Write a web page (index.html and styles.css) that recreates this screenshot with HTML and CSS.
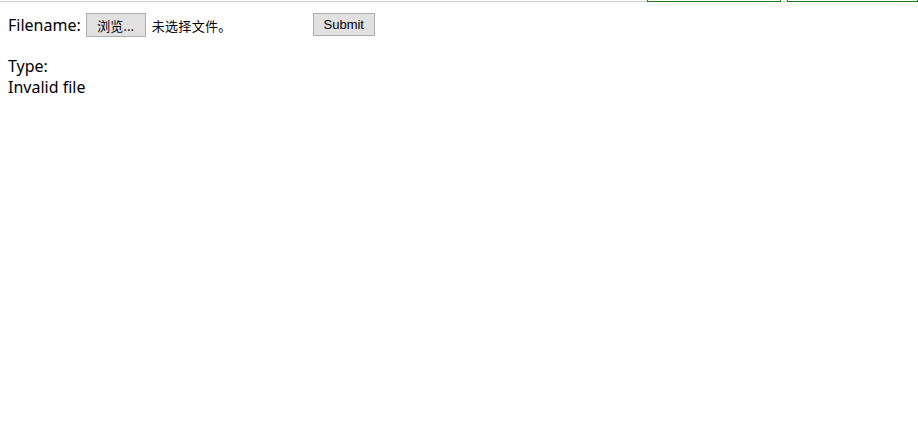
FILE: index.html
```html
<!DOCTYPE html>
<html lang="zh">
<head>
<meta charset="utf-8">
<link rel="stylesheet" href="styles.css">
</head>
<body>
<div class="topstrip">
  <div class="topline"></div>
  <div class="tab tab-a"></div>
  <div class="tab-gap"></div>
  <div class="tab tab-b"></div>
</div>
<form class="upload">
  <span class="label">Filename:</span>
  <span class="btn browse">浏览...</span>
  <span class="nofile">未选择文件。</span>
  <span class="btn submit">Submit</span>
</form>
<div class="result">
  <div class="line">Type:</div>
  <div class="line">Invalid file</div>
</div>
</body>
</html>
```
FILE: styles.css
```css
html, body { margin: 0; padding: 0; background: #fff; }
body {
  font-family: "Noto Sans", "Noto Sans CJK SC", sans-serif;
  font-size: 16px;
  color: #000;
}
.topstrip {
  display: flex;
  height: 3px;
  align-items: flex-start;
}
.topline {
  width: 647px;
  height: 2px;
  border-bottom: 1px solid #d0d0d0;
  box-sizing: border-box;
}
.tab {
  height: 2px;
  box-sizing: border-box;
  border: 1px solid #1f7a1f;
  border-top: none;
}
.tab-a { width: 134px; }
.tab-gap { width: 6px; height: 2px; border-bottom: 1px solid #d0d0d0; box-sizing: border-box; }
.tab-b { flex: 1; }
.upload {
  display: flex;
  align-items: center;
  padding: 10px 0 0 8px;
  height: 24px;
}
.label { margin-right: 5px; line-height: 21px; }
.btn {
  box-sizing: border-box;
  display: inline-flex;
  align-items: center;
  justify-content: center;
  background: #e1e1e1;
  border: 1px solid #adadad;
  font-family: "Liberation Sans", "Noto Sans CJK SC", sans-serif;
  font-size: 13px;
}
.browse { width: 60px; height: 24px; font-family: "Noto Sans CJK SC", sans-serif; }
.nofile {
  margin-left: 6px;
  width: 161px;
  font-family: "Noto Sans CJK SC", sans-serif;
  font-size: 13px;
  padding-top: 1px;
  letter-spacing: 0.3px;
}
.submit { width: 62px; height: 23px; margin-top: -1px; }
.result { padding: 19px 0 0 8px; }
.line { line-height: 21px; }
```
